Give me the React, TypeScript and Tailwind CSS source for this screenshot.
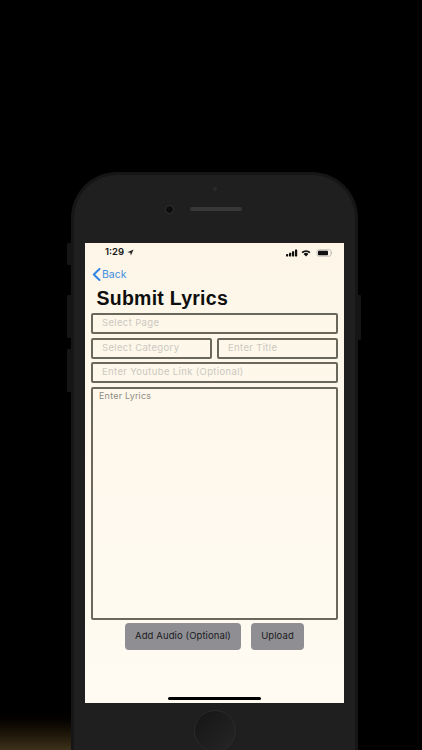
function Field({ label, className }: { label: string; className: string }) {
  return (
    <div className={`flex h-[21px] items-center rounded-[2px] border-2 border-[#6a675c] pl-[9px] text-[9.5px] tracking-[0.35px] text-[#cbc8c0] ${className}`}>
      {label}
    </div>
  );
}

function StatusIcons() {
  return (
    <svg width="46" height="8" viewBox="0 0 46 8" fill="none">
      <rect x="0" y="5" width="2.2" height="2.5" rx="0.4" fill="#111" />
      <rect x="3" y="3.8" width="2.2" height="3.7" rx="0.4" fill="#111" />
      <rect x="6" y="2.2" width="2.2" height="5.3" rx="0.4" fill="#111" />
      <rect x="9" y="0.5" width="2.2" height="7" rx="0.4" fill="#111" />
      <path d="M15.5 3 A6.5 6.5 0 0 1 24.5 3 L23.3 4.2 A4.8 4.8 0 0 0 16.7 4.2 Z" fill="#111" />
      <path d="M17.6 5 A3.5 3.5 0 0 1 22.4 5 L20 7.6 Z" fill="#111" />
      <rect x="31" y="0.8" width="14" height="6.4" rx="1.6" stroke="#aaa" strokeWidth="0.7" />
      <rect x="32" y="1.8" width="10" height="4.4" rx="0.8" fill="#111" />
      <rect x="45.4" y="3" width="0.6" height="2" fill="#aaa" />
    </svg>
  );
}

export default function App() {
  return (
    <div className="relative h-[750px] w-[422px] overflow-hidden bg-black font-['Inter',sans-serif]">
      <div className="absolute bottom-0 left-0 h-[45px] w-[80px] bg-gradient-to-b from-black to-[#3d311a]" />

      {/* side buttons */}
      <div className="absolute left-[67px] top-[243px] h-[22px] w-[4px] rounded-l-[1px] bg-[#151515]" />
      <div className="absolute left-[67px] top-[295px] h-[43px] w-[4px] rounded-l-[1px] bg-[#151515]" />
      <div className="absolute left-[67px] top-[349px] h-[43px] w-[4px] rounded-l-[1px] bg-[#151515]" />
      <div className="absolute left-[358px] top-[295px] h-[45px] w-[3px] rounded-r-[1px] bg-[#151515]" />

      <div className="relative ml-[71px] mt-[172px] flex h-[600px] w-[287px] flex-col items-center rounded-t-[46px] border-[3px] border-b-0 border-[#161618] bg-[#1f1f1f] px-[11px]">
        {/* earpiece area */}
        <div className="relative h-[68px] w-full shrink-0">
          <div className="absolute left-[128px] top-[12px] h-[4px] w-[4px] rounded-full bg-[#2c2c2e]" />
          <div className="absolute left-[80px] top-[30px] h-[9px] w-[9px] rounded-full border border-[#333] bg-[#0c0c0c]" />
          <div className="absolute left-[105px] top-[32px] h-[4px] w-[52px] rounded-full bg-[#38383a]" />
        </div>

        {/* screen */}
        <div className="flex h-[460px] w-[259px] shrink-0 flex-col bg-gradient-to-b from-[#fdf6e8] to-[#fffbf2]">
          <div className="flex h-[19px] items-center justify-between pl-[20px] pr-[12px]">
            <div className="flex items-center gap-[3px] text-[9.5px] font-semibold text-[#151515]">
              1:29
              <svg width="7" height="7" viewBox="0 0 8 8">
                <path d="M7.5 0.5 L0.5 3.6 L3.8 4.2 L4.4 7.5 Z" fill="#222" />
              </svg>
            </div>
            <StatusIcons />
          </div>

          <div className="mt-[6px] flex h-[13px] items-center pl-[7px] text-[10.5px] text-[#3d8ee0]">
            <svg width="9" height="13" viewBox="0 0 9 13" fill="none" className="mr-[1px]">
              <path d="M7.5 1 L1.8 6.5 L7.5 12" stroke="#2f86e4" strokeWidth="2" strokeLinecap="round" strokeLinejoin="round" />
            </svg>
            Back
          </div>

          <h1 className="mt-[4px] h-[26px] pl-[11.5px] font-['Liberation_Sans',sans-serif] text-[19.5px] font-bold leading-[26px] tracking-[0.25px] text-[#0e0e0e]">
            Submit Lyrics
          </h1>

          <div className="mt-[2px] flex flex-col gap-[3.5px] px-[6px]">
            <Field label="Select Page" className="w-full" />
            <div className="flex gap-[5px]">
              <Field label="Select Category" className="w-[121px]" />
              <Field label="Enter Title" className="flex-1" />
            </div>
            <Field label="Enter Youtube Link (Optional)" className="w-full" />
            <div className="h-[233px] rounded-[2px] border-2 border-[#6a675c] px-[6px] text-[9px] tracking-[0.2px] text-[#8f8c84]">
              Enter Lyrics
            </div>
          </div>

          <div className="mt-[3px] flex justify-center gap-[10px] text-[9.5px] tracking-[0.1px] text-[#1b1b1d]">
            <div className="flex h-[27px] w-[116px] items-center justify-center rounded-[4px] bg-[#8e8e93]">Add Audio (Optional)</div>
            <div className="flex h-[27px] w-[53px] items-center justify-center rounded-[4px] bg-[#8e8e93]">Upload</div>
          </div>

          <div className="mx-auto mt-[47px] h-[3px] w-[93px] rounded-full bg-black" />
        </div>

        {/* home button */}
        <div className="mt-[7px] h-[42px] w-[42px] shrink-0 rounded-full border border-[#2a2a2a] bg-gradient-to-br from-[#151515] to-[#262626]" />
      </div>
    </div>
  );
}
